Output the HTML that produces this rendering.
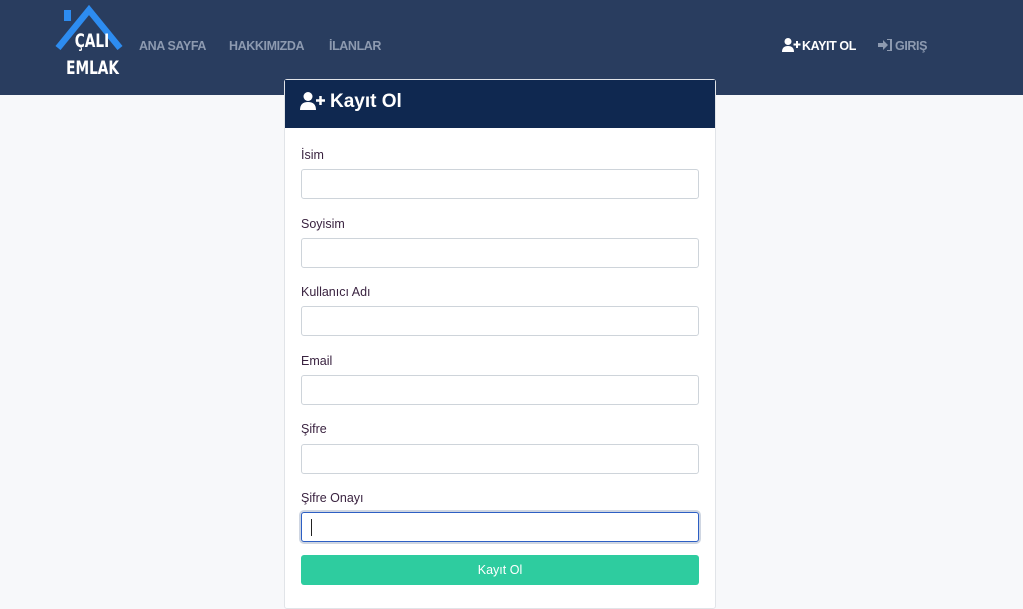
<!DOCTYPE html>
<html><head><meta charset="utf-8"><style>
*{box-sizing:border-box;margin:0;padding:0}
body{width:1023px;height:596px;overflow:hidden;background:#f7f8fa;font-family:"Liberation Sans",sans-serif;position:relative}
.nav{position:absolute;left:0;top:0;width:1023px;height:95px;background:#293d5f}
.nav a{position:absolute;top:39px;font-size:12.5px;font-weight:bold;color:#8d9ab0;letter-spacing:-0.4px}
.card{position:absolute;left:284px;top:79px;width:432px;height:530px;background:#fff;border:1px solid #e1e4e8;border-radius:3px}
.ch{position:absolute;left:0;top:0;width:430px;height:48px;background:#0f2850;color:#fff;font-size:19px;font-weight:bold}
.lbl{position:absolute;left:16px;font-size:12.5px;color:#3a2340}
.inp{position:absolute;left:16px;width:398px;height:30px;border:1px solid #ced4da;border-radius:3px;background:#fff}
</style></head><body>
<div class="nav">
<svg style="position:absolute;left:55px;top:4px" width="68" height="46" viewBox="0 0 68 46"><rect x="9" y="6" width="7" height="11" fill="#2d8cf0"/><polyline points="3,44 34,6 65,44" fill="none" stroke="#2d8cf0" stroke-width="6.5"/></svg>
<div style="position:absolute;left:70px;top:31px;color:#fff;font-weight:bold;font-size:19px;line-height:21px;text-align:center;width:34px;transform:scaleX(0.72);font-family:'DejaVu Sans','Liberation Sans',sans-serif">ÇALI</div>
<div style="position:absolute;left:58px;top:58px;color:#fff;font-weight:bold;font-size:19px;line-height:21px;width:58px;text-align:center;transform:scaleX(0.72);font-family:'DejaVu Sans','Liberation Sans',sans-serif">EMLAK</div>
<a style="left:139px">ANA SAYFA</a>
<a style="left:229px">HAKKIMIZDA</a>
<a style="left:329px">İLANLAR</a>
<svg style="position:absolute;left:782px;top:38px" width="19" height="14" viewBox="0 0 19 14"><circle cx="6" cy="3.5" r="3.5" fill="#fff"/><path d="M0 14 Q0 8 6 8 Q12 8 12 14Z" fill="#fff"/><path d="M15 3v7M11.5 6.5h7" stroke="#fff" stroke-width="2"/></svg>
<a style="left:802px;color:#fff">KAYIT OL</a>
<svg style="position:absolute;left:878px;top:39px" width="14" height="12" viewBox="0 0 14 12"><path d="M0 4h5V1l5 5-5 5V8H0z" fill="#8d9ab0"/><path d="M9 0h4v12H9" fill="none" stroke="#8d9ab0" stroke-width="2"/></svg>
<a style="left:895px">GIRIŞ</a>
</div>
<div class="card">
<div class="ch"><svg style="position:absolute;left:15px;top:12px" width="26" height="18" viewBox="0 0 26 18"><circle cx="8" cy="4.5" r="4.5" fill="#fff"/><path d="M0 18 Q0 10 8 10 Q16 10 16 18Z" fill="#fff"/><path d="M20.5 4v9M16 8.5h9" stroke="#fff" stroke-width="2.5"/></svg><span style="position:absolute;left:45px;top:11px">Kayıt Ol</span></div>
<div class="lbl" style="top:68px">İsim</div><div class="inp" style="top:89px"></div>
<div class="lbl" style="top:137px">Soyisim</div><div class="inp" style="top:158px"></div>
<div class="lbl" style="top:205px">Kullanıcı Adı</div><div class="inp" style="top:226px"></div>
<div class="lbl" style="top:274px">Email</div><div class="inp" style="top:295px"></div>
<div class="lbl" style="top:342px">Şifre</div><div class="inp" style="top:364px"></div>
<div class="lbl" style="top:411px">Şifre Onayı</div><div class="inp" style="top:432px;border:1px solid #2d5fc4;box-shadow:0 0 0 2px #cfd6e2"><div style="position:absolute;left:9px;top:6px;width:1px;height:17px;background:#222"></div></div>
<div style="position:absolute;left:16px;top:475px;width:398px;height:30px;background:#2ecc9f;border-radius:3px;color:#fff;font-size:12.5px;text-align:center;line-height:30px">Kayıt Ol</div>
</div>
</body></html>
